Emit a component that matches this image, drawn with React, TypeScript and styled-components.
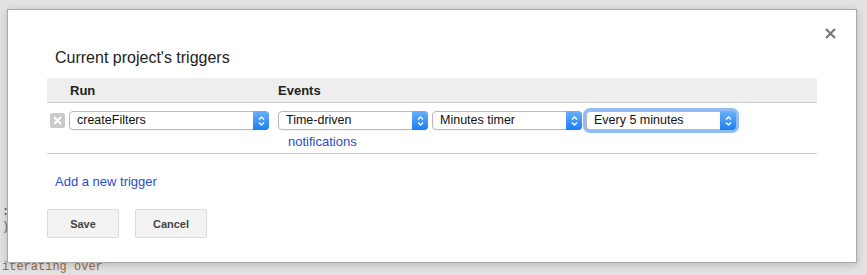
import styled, { createGlobalStyle } from 'styled-components';

const GlobalStyle = createGlobalStyle`
  html, body {
    margin: 0;
    padding: 0;
    background: #e2e2e2;
    font-family: "Liberation Sans", Arial, sans-serif;
  }
`;

const Backdrop = styled.div`
  position: relative;
  width: 867px;
  height: 275px;
  overflow: hidden;
  background: #e2e2e2;
`;

const Code = styled.pre`
  margin: 0;
  padding: 205px 0 0 2px;
  font-family: "Liberation Mono", "Courier New", monospace;
  font-size: 12px;
  line-height: 15px;
  color: #777;
`;

const CodeLine = styled.div<{ $tone?: string; $gap?: number }>`
  color: ${(p) => p.$tone || '#777'};
  margin-top: ${(p) => p.$gap || 0}px;
  white-space: pre;
`;

const Dialog = styled.div`
  position: absolute;
  left: 7px;
  top: 9px;
  width: 850px;
  height: 254px;
  background: #fff;
  border: 1px solid #a9a9a9;
  box-shadow: 0 2px 8px rgba(0, 0, 0, 0.18);
  padding: 0 39px;
  box-sizing: border-box;
`;

const CloseButton = styled.button`
  position: absolute;
  right: 19px;
  top: 17px;
  width: 13px;
  height: 13px;
  padding: 0;
  border: none;
  background: none;
  cursor: pointer;
  display: flex;
  align-items: center;
  justify-content: center;
`;

const Title = styled.h2`
  margin: 38px 0 10px 8px;
  font-size: 16px;
  line-height: 20px;
  font-weight: normal;
  color: #222;
`;

const Table = styled.div`
  width: 770px;
`;

const HeaderRow = styled.div`
  display: flex;
  height: 24px;
  align-items: center;
  background: #eeeeee;
  border-bottom: 1px solid #cccccc;
  font-size: 13px;
  font-weight: bold;
  color: #222;
`;

const HeadCell = styled.div<{ $width?: number; $indent?: number }>`
  width: ${(p) => (p.$width ? `${p.$width}px` : 'auto')};
  padding-left: ${(p) => p.$indent || 0}px;
  box-sizing: border-box;
`;

const Row = styled.div`
  display: flex;
  height: 51px;
  padding-top: 8px;
  box-sizing: border-box;
  border-bottom: 1px solid #cccccc;
`;

const RunCell = styled.div`
  width: 231px;
  display: flex;
  align-items: flex-start;
  gap: 4px;
  padding-left: 3px;
  box-sizing: border-box;
`;

const DeleteIcon = styled.span`
  width: 15px;
  height: 15px;
  margin-top: 2px;
  background: #c9c9c9;
  border-radius: 2px;
  display: flex;
  align-items: center;
  justify-content: center;
`;

const EventsCell = styled.div`
  display: flex;
  flex-direction: column;
`;

const Selects = styled.div`
  display: flex;
  gap: 4px;
`;

const Select = styled.div<{ $width: number; $focused?: boolean }>`
  width: ${(p) => p.$width}px;
  height: 19px;
  display: flex;
  background: #fff;
  border: 1px solid #b9b9b9;
  border-radius: 4px;
  box-sizing: border-box;
  font-size: 12.5px;
  color: #111;
  box-shadow: ${(p) =>
    p.$focused ? '0 0 0 3px rgba(110, 165, 240, 0.75)' : '0 1px 0 rgba(0,0,0,0.04)'};
`;

const SelectLabel = styled.span`
  flex: 1;
  padding-left: 7px;
  line-height: 17px;
  white-space: nowrap;
  overflow: hidden;
`;

const Stepper = styled.span`
  width: 16px;
  margin: -1px -1px -1px 0;
  border-radius: 0 4px 4px 0;
  background: linear-gradient(#6bb0fb, #1b7ef4);
  display: flex;
  align-items: center;
  justify-content: center;
`;

const Link = styled.a`
  color: #1f4fcc;
  font-size: 13px;
  line-height: 16px;
  text-decoration: none;
  cursor: pointer;
`;

const NotifyLink = styled(Link)`
  margin: 4px 0 0 10px;
`;

const AddLink = styled(Link)`
  display: inline-block;
  margin: 20px 0 0 8px;
`;

const Buttons = styled.div`
  display: flex;
  gap: 16px;
  margin-top: 19px;
`;

const Button = styled.button`
  width: 72px;
  height: 29px;
  background: #f3f3f3;
  border: 1px solid #dadada;
  border-radius: 2px;
  font-family: "Liberation Sans", Arial, sans-serif;
  font-size: 11px;
  font-weight: bold;
  color: #444;
  cursor: pointer;
`;

const Chevrons = () => (
  <svg width="9" height="12" viewBox="0 0 9 12">
    <path d="M2 4.5 L4.5 2 L7 4.5 M2 7.5 L4.5 10 L7 7.5" fill="none" stroke="#fff" strokeWidth="1.3" />
  </svg>
);

const Dropdown = ({ label, width, focused }: { label: string; width: number; focused?: boolean }) => (
  <Select $width={width} $focused={focused}>
    <SelectLabel>{label}</SelectLabel>
    <Stepper>
      <Chevrons />
    </Stepper>
  </Select>
);

const App = () => {
  return (
    <Backdrop>
      <GlobalStyle />
      <Code>
        <CodeLine $tone="#555">:</CodeLine>
        <CodeLine $tone="#666">)</CodeLine>
        <CodeLine $tone="#9a6a3a" $gap={25}>iterating over</CodeLine>
      </Code>
      <Dialog>
        <CloseButton aria-label="Close">
          <svg width="11" height="11" viewBox="0 0 11 11">
            <path d="M1 1 L10 10 M10 1 L1 10" stroke="#777" strokeWidth="2.2" />
          </svg>
        </CloseButton>
        <Title>Current project's triggers</Title>
        <Table>
          <HeaderRow>
            <HeadCell $width={231} $indent={23}>Run</HeadCell>
            <HeadCell>Events</HeadCell>
          </HeaderRow>
          <Row>
            <RunCell>
              <DeleteIcon>
                <svg width="9" height="9" viewBox="0 0 9 9">
                  <path d="M1 1 L8 8 M8 1 L1 8" stroke="#fff" strokeWidth="2" />
                </svg>
              </DeleteIcon>
              <Dropdown label="createFilters" width={200} />
            </RunCell>
            <EventsCell>
              <Selects>
                <Dropdown label="Time-driven" width={150} />
                <Dropdown label="Minutes timer" width={150} />
                <Dropdown label="Every 5 minutes" width={150} focused />
              </Selects>
              <NotifyLink>notifications</NotifyLink>
            </EventsCell>
          </Row>
        </Table>
        <AddLink>Add a new trigger</AddLink>
        <Buttons>
          <Button>Save</Button>
          <Button>Cancel</Button>
        </Buttons>
      </Dialog>
    </Backdrop>
  );
};

export default App;
